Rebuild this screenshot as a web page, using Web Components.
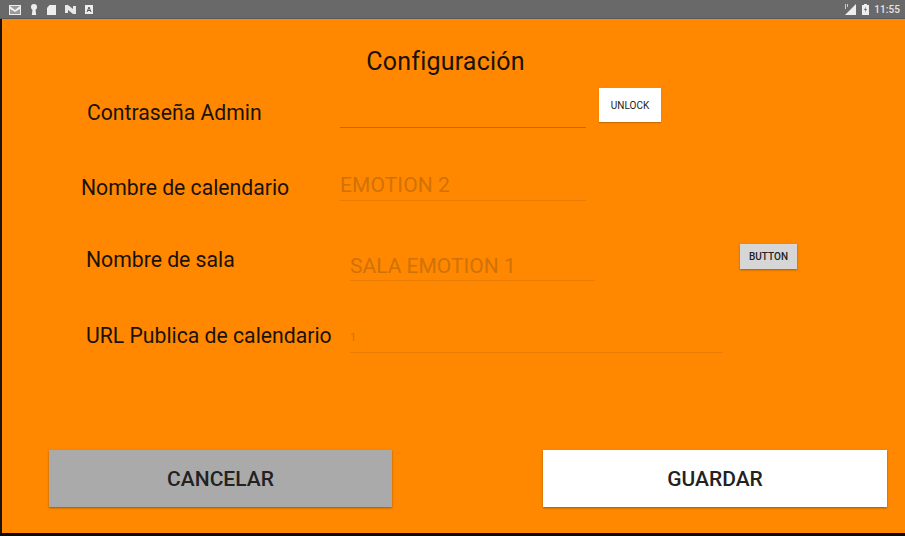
<!DOCTYPE html>
<html><head><meta charset="utf-8">
<style>
html,body{margin:0;padding:0;width:905px;height:536px;overflow:hidden;background:#0c0a08;font-family:Roboto,"Liberation Sans",sans-serif}
</style></head><body>
<template id="t-status"><style>
:host{display:flex;align-items:center;height:19px;background:#696969;padding:0 5px 0 9px;color:#e6e6e6;box-shadow:inset 0 -1px 0 #5a5a5a}
svg{display:block;flex:none}
.left{display:flex;gap:9px;align-items:center}
.right{margin-left:auto;display:flex;align-items:center;gap:4px;font-size:10px;font-weight:500;letter-spacing:.1px}
</style>
<div class="left">
<svg width="12" height="10" viewBox="0 0 12 10"><rect x=".5" y=".5" width="11" height="9" fill="#9a9a9a" stroke="#eee"/><path d="M1 1 6 5l5-4v3L6 7 1 4z" fill="#eee"/></svg>
<svg width="8" height="11" viewBox="0 0 8 11"><circle cx="4" cy="3" r="3" fill="#eee"/><path d="M2.600 5h2.800l.8 6H1.800z" fill="#eee"/></svg>
<svg width="9" height="10" viewBox="0 0 9 10"><path d="M2.500 0H9v10H0V3z" fill="#eee"/></svg>
<svg width="11" height="9" viewBox="0 0 11 9"><path d="M0 0h3l5 4V1h3v8H8L3 5v3H0z" fill="#e8e8e8"/></svg>
<svg width="8" height="9" viewBox="0 0 8 9"><rect width="8" height="9" fill="#eee"/><path d="M2 7 4 2l2 5M3 5.500h2" stroke="#555" fill="none"/></svg>
</div>
<div class="right">
<svg width="12" height="11" viewBox="0 0 12 11"><path d="M12 0v11H1z" fill="#eee"/><path d="M1 0h1v5H1zM3 0h1v3H3z" fill="#ccc"/></svg>
<svg width="7" height="11" viewBox="0 0 7 11" style="margin-left:2px"><path d="M2 0h3v1h2v10H0V1h2z" fill="#eee"/><path d="M4 2.500 2 6h1.500L3 8.500 5 5H3.500z" fill="#666"/></svg>
<span style="margin-left:1px">11:55</span>
</div></template>

<template id="t-btn"><style>
:host{display:flex;align-items:center;justify-content:center;box-sizing:border-box;color:#222;background:var(--bg,#fff);font-size:var(--fs,21px);font-weight:500;padding-top:var(--pt,1px);box-shadow:0 1px 2px rgba(90,50,0,.55)}
</style><slot></slot></template>

<template id="t-row"><style>
:host{display:flex;align-items:flex-start;height:var(--h);box-sizing:border-box}
.label{flex:none;width:var(--lw);padding-left:var(--lx);padding-top:var(--ly);box-sizing:border-box;font-size:21.200px;line-height:26px;color:#1a1208;white-space:nowrap}
</style><div class="label"><slot name="label"></slot></div><slot></slot></template>

<template id="t-field"><style>
:host{display:block;box-sizing:border-box;flex:none;width:var(--w);height:var(--fh);margin-top:var(--fy);border-bottom:1px solid var(--line,#e97c05);color:#d07206;font-size:var(--tfs,21px);line-height:var(--tlh,26px);white-space:nowrap}
</style><slot></slot></template>

<template id="t-screen"><style>
:host{display:flex;flex-direction:column;width:905px;height:533px;box-sizing:border-box;background:#ff8800;border-left:2px solid #1b1208}
h1{margin:0;font-weight:400;font-size:25px;line-height:30px;color:#1a1208;text-align:center;padding:28px 0 0 0;position:relative;left:-8px;letter-spacing:.2px}
.rows{flex:1;display:flex;flex-direction:column;padding-top:18px}
.actions{display:flex;justify-content:space-between;padding:0 18px 26px 47px;height:57px}
</style>
<div style="margin-left:-2px"><slot name="status"></slot></div>
<h1>Configuración</h1>
<div class="rows"><slot></slot></div>
<div class="actions"><slot name="actions"></slot></div></template>

<script>
function def(name,tpl){customElements.define(name,class extends HTMLElement{constructor(){super();this.attachShadow({mode:'open'}).appendChild(document.getElementById(tpl).content.cloneNode(true));}});}
def('status-bar','t-status');def('flat-btn','t-btn');def('form-row','t-row');def('text-field','t-field');def('app-screen','t-screen');
</script>

<app-screen>
<status-bar slot="status"></status-bar>

<form-row style="--h:74px;--lw:338px;--lx:85px;--ly:5px">
<span slot="label">Contraseña Admin</span>
<text-field style="--w:246px;--fh:35px;--fy:-2px;--line:#c4660d"></text-field>
<flat-btn style="width:62px;height:34px;margin:-7px 0 0 13px;--pt:0;--fs:10px;font-weight:400;box-shadow:0 1px 1px rgba(120,70,0,.4)">UNLOCK</flat-btn>
</form-row>

<form-row style="--h:75px;--lw:338px;--lx:79px;--ly:6px">
<span slot="label">Nombre de calendario</span>
<text-field style="--w:246px;--fh:29px;--fy:3px"><span style="letter-spacing:.1px">EMOTION 2</span></text-field>
</form-row>

<form-row style="--h:72px;--lw:348px;--lx:84px;--ly:3px">
<span slot="label">Nombre de sala</span>
<text-field style="--w:245px;--fh:32px;--fy:5px"><span style="position:relative;top:4px">SALA EMOTION 1</span></text-field>
<flat-btn style="width:57px;height:25px;margin:0 0 0 145px;--pt:0;--bg:#d6d6d6;--fs:10px;box-shadow:0 1px 2px rgba(90,50,0,.5)">BUTTON</flat-btn>
</form-row>

<form-row style="--h:auto;--lw:348px;--lx:84px;--ly:7px">
<span slot="label">URL Publica de calendario</span>
<text-field style="--w:373px;--fh:32px;--fy:5px;--tfs:11px;--tlh:34px">1</text-field>
</form-row>

<flat-btn slot="actions" style="width:343px;height:57px;--bg:#aaaaaa">CANCELAR</flat-btn>
<flat-btn slot="actions" style="width:344px;height:57px">GUARDAR</flat-btn>
</app-screen>
</body></html>
